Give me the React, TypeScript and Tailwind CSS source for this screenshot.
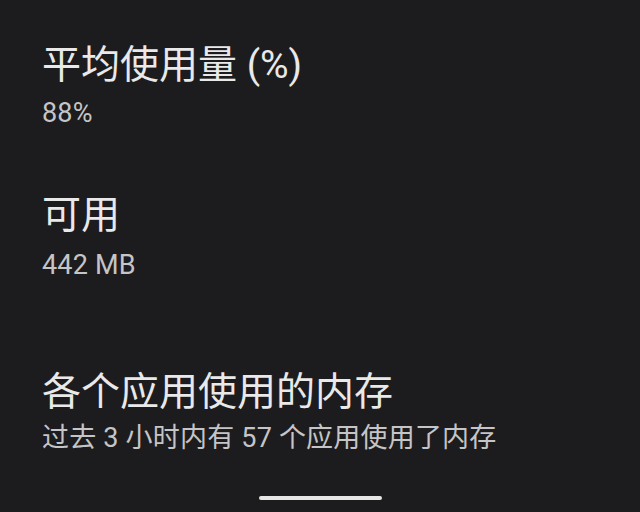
export default function App() {
  const font = { fontFamily: 'Roboto, "Noto Sans CJK SC", sans-serif' };
  return (
    <div className="w-[640px] h-[512px] bg-[#1c1c1e] overflow-hidden flex flex-col" style={font}>
      <div className="flex flex-col pl-[42px] pt-[43px]">
        <div className="text-[39px] leading-[44px] text-[#e9e9ea]">平均使用量 (%)</div>
        <div className="mt-[8px] text-[27px] leading-[36px] tracking-[0.2px] text-[#c5c5c7]">88%</div>
      </div>
      <div className="flex flex-col pl-[42px] pt-[62px]">
        <div className="text-[39px] leading-[44px] text-[#e9e9ea]">可用</div>
        <div className="mt-[10px] text-[27px] leading-[36px] tracking-[0.2px] text-[#c5c5c7]">442 MB</div>
      </div>
      <div className="flex flex-col pl-[42px] pt-[87px]">
        <div className="text-[39px] leading-[44px] text-[#e9e9ea]">各个应用使用的内存</div>
        <div className="mt-[6px] text-[27px] leading-[36px] tracking-[0.2px] text-[#c5c5c7]">过去 3 小时内有 57 个应用使用了内存</div>
      </div>
      <div className="flex justify-center pt-[40px]">
        <div className="w-[123px] h-[4px] rounded-full bg-[#e6e6e6]" />
      </div>
    </div>
  );
}
